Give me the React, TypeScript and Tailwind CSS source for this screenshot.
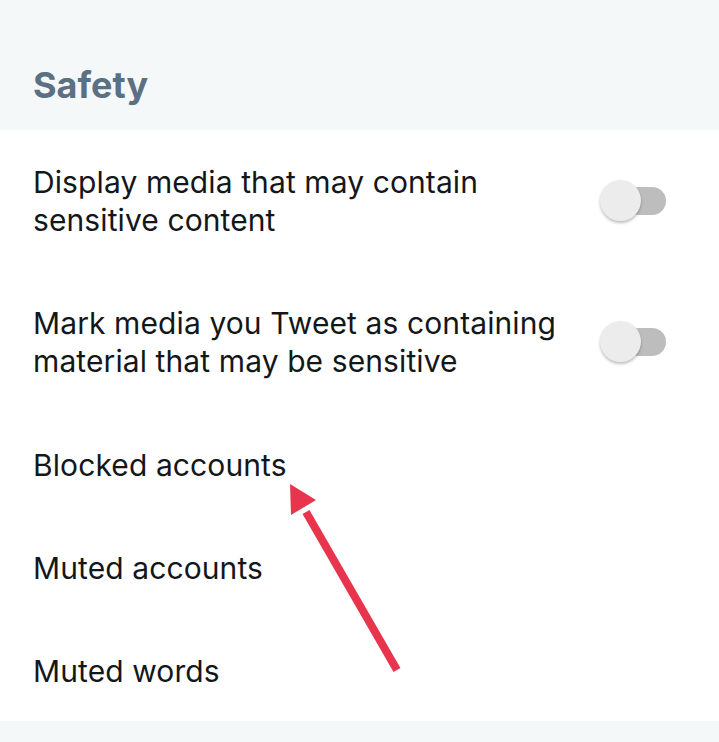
import React from "react";

const font = { fontFamily: "Inter, 'Noto Sans', sans-serif" };

const Toggle = () => (
    <div className="relative w-[66px] h-[42px] shrink-0 flex items-center">
        <div className="absolute left-[25px] right-0 h-[28px] rounded-full bg-[#bdbdbd]" />
        <div className="absolute left-0 w-[41px] h-[41px] rounded-full bg-[#ececec] shadow-[0_2px_3px_rgba(0,0,0,0.25)]" />
    </div>
);

const ToggleRow = ({ children }: { children: React.ReactNode }) => (
    <div className="flex items-center justify-between h-[141px] pl-[33px] pr-[53px]">
        <p className="text-[30px] leading-[38px] text-[#14171a] max-w-[530px] tracking-[0.1px]">{children}</p>
        <Toggle />
    </div>
);

const LinkRow = ({ label }: { label: string }) => (
    <div className="flex items-center h-[103px] pl-[33px] pt-[2px]">
        <span className="text-[30px] leading-[38px] text-[#14171a] tracking-[0.1px]">{label}</span>
    </div>
);

export default function App() {
    return (
        <div className="relative w-[719px] h-[742px] bg-white overflow-hidden" style={font}>
            <div className="h-[130px] bg-[#f5f8f9] flex items-center pl-[33px] pt-[40px]">
                <h2 className="text-[36px] font-bold text-[#5b7083]">Safety</h2>
            </div>
            <ToggleRow>Display media that may contain sensitive content</ToggleRow>
            <ToggleRow>Mark media you Tweet as containing material that may be sensitive</ToggleRow>
            <LinkRow label="Blocked accounts" />
            <LinkRow label="Muted accounts" />
            <LinkRow label="Muted words" />
            <div className="h-[21px] bg-[#f5f8f9]" />

            <svg className="absolute left-0 top-0" width="719" height="742" viewBox="0 0 719 742">
                <line x1="397" y1="670" x2="306" y2="512" stroke="#e6354d" strokeWidth="8" />
                <polygon points="290,484 316,500 291,515" fill="#e6354d" />
            </svg>
        </div>
    );
}
